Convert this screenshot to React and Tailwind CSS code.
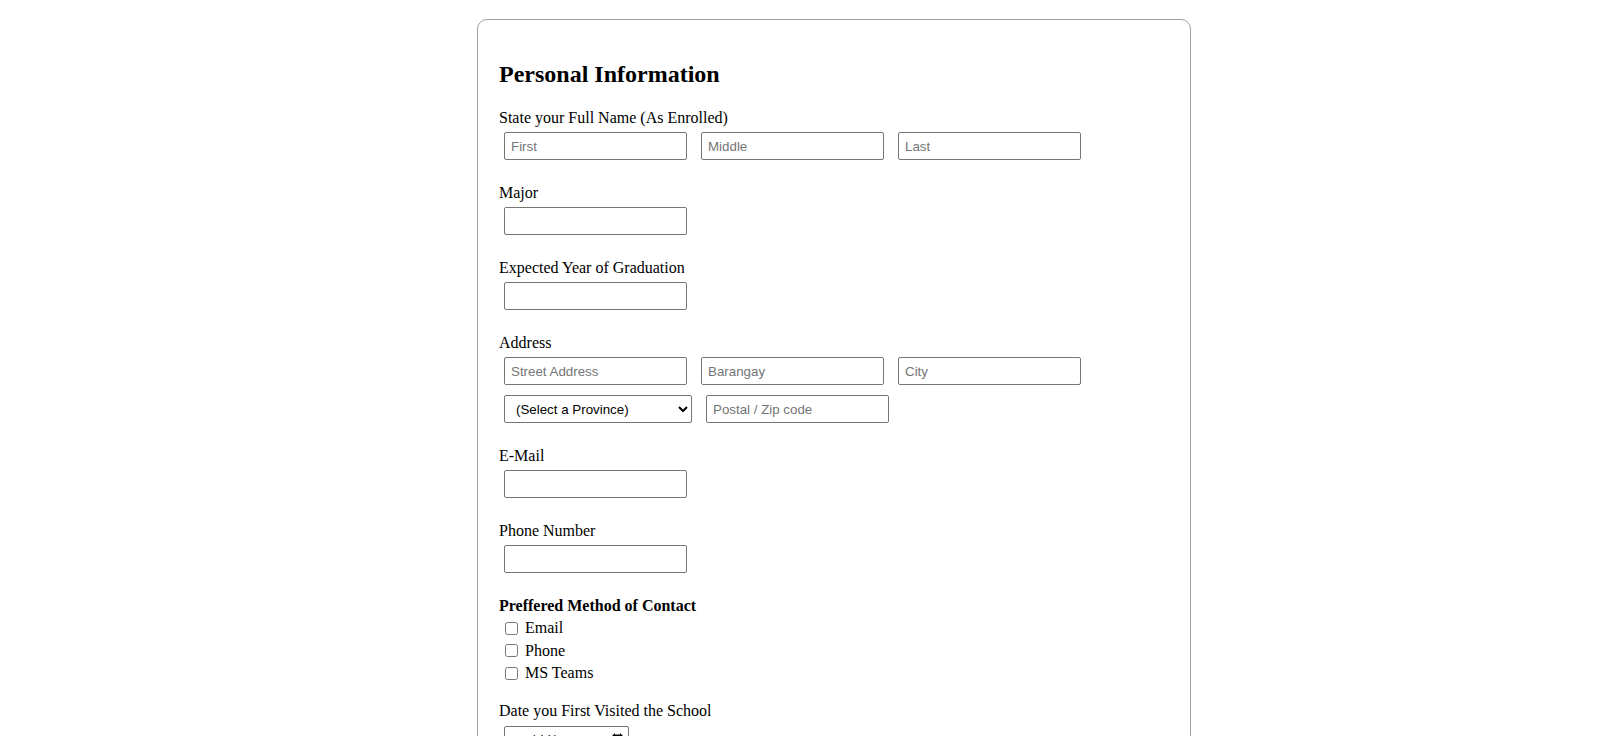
import React from 'react';

const inputCls =
    "h-[28px] w-[183px] border border-[#767676] rounded-[2px] px-[6px] text-[13.33px] font-['Liberation_Sans',Arial,sans-serif] text-black placeholder:text-[#757575] outline-none bg-white";

function Label({ children, bold }) {
    return (
        <div className={"leading-[18px] pt-[1.5px] text-[16px] " + (bold ? 'font-bold' : '')}>
            {children}
        </div>
    );
}

function Field({ label, children, last }) {
    return (
        <div className={last ? '' : 'mb-[22px]'}>
            <Label>{label}</Label>
            <div className="mt-[5.5px] pl-[5px] flex flex-col gap-[10px]">{children}</div>
        </div>
    );
}

export default function App() {
    return (
        <div className="min-h-[1025px] bg-white pl-[477px] pt-[19px] pb-[20px] font-['Liberation_Serif','Times_New_Roman',serif] text-black">
            <div className="w-[714px] border border-[#a0a0a0] rounded-[10px] px-[21px] pt-[20px] pb-[30px]">
                <h2 className="text-[24px] font-bold leading-[27px] mt-[21px] mb-[19px]">Personal Information</h2>

                <Field label="State your Full Name (As Enrolled)">
                    <div className="flex gap-[14px]">
                        <input className={inputCls} placeholder="First" />
                        <input className={inputCls} placeholder="Middle" />
                        <input className={inputCls} placeholder="Last" />
                    </div>
                </Field>

                <Field label="Major">
                    <input className={inputCls} />
                </Field>

                <Field label="Expected Year of Graduation">
                    <input className={inputCls} />
                </Field>

                <Field label="Address">
                    <div className="flex gap-[14px]">
                        <input className={inputCls} placeholder="Street Address" />
                        <input className={inputCls} placeholder="Barangay" />
                        <input className={inputCls} placeholder="City" />
                    </div>
                    <div className="flex gap-[14px]">
                        <select className="h-[28px] w-[188px] border border-[#767676] rounded-[2px] pl-[7px] text-[13.33px] font-['Liberation_Sans',Arial,sans-serif] text-black bg-white">
                            <option>(Select a Province)</option>
                            <option>Metro Manila</option>
                            <option>Cebu</option>
                            <option>Davao del Sur</option>
                        </select>
                        <input className={inputCls} placeholder="Postal / Zip code" />
                    </div>
                </Field>

                <Field label="E-Mail">
                    <input className={inputCls} type="email" />
                </Field>

                <Field label="Phone Number">
                    <input className={inputCls} type="tel" />
                </Field>

                <div className="mb-[16px]">
                    <Label bold>Preffered Method of Contact</Label>
                    <div className="mt-[2.5px] flex flex-col">
                        {['Email', 'Phone', 'MS Teams'].map(opt => (
                            <label key={opt} className="h-[22.5px] flex items-center pl-[6px] text-[16px]">
                                <input type="checkbox" className="w-[13px] h-[13px] m-0" />
                                <span className="ml-[7px]">{opt}</span>
                            </label>
                        ))}
                    </div>
                </div>

                <Field label="Date you First Visited the School">
                    <input
                        type="date"
                        className="h-[28px] w-[125px] border border-[#767676] rounded-[2px] px-[2px] text-[13.33px] font-['Liberation_Sans',Arial,sans-serif] bg-white"
                    />
                </Field>

                <Field label="How did you hear about us?">
                    <input className={inputCls} />
                </Field>

                <Field label="Comments" last>
                    <textarea className="w-[400px] h-[80px] border border-[#767676] rounded-[2px] p-[6px] text-[13.33px] font-['Liberation_Sans',Arial,sans-serif]" />
                </Field>

                <div className="mt-[20px] pl-[5px]">
                    <button className="h-[28px] px-[12px] border border-[#767676] rounded-[2px] bg-[#efefef] text-[13.33px] font-['Liberation_Sans',Arial,sans-serif]">
                        Submit
                    </button>
                </div>
            </div>
        </div>
    );
}
